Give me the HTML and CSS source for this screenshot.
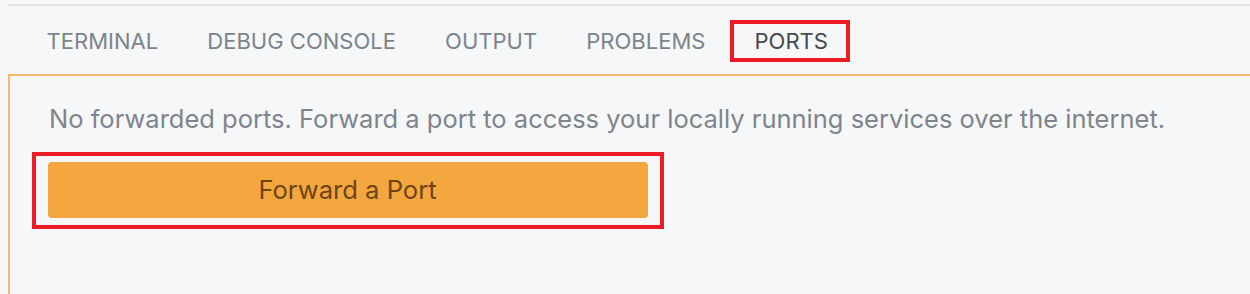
FILE: index.html
```html
<!DOCTYPE html>
<html>
<head>
<meta charset="utf-8">
<link rel="stylesheet" href="styles.css">
</head>
<body>
<div class="frame">
  <div class="tabs">
    <div class="tab">TERMINAL</div>
    <div class="tab">DEBUG CONSOLE</div>
    <div class="tab">OUTPUT</div>
    <div class="tab">PROBLEMS</div>
    <div class="tab tab-active">PORTS</div>
  </div>
  <div class="panel">
    <p class="message">No forwarded ports. Forward a port to access your locally running services over the internet.</p>
    <div class="highlight">
      <button class="forward-btn">Forward a Port</button>
    </div>
  </div>
</div>
</body>
</html>
```

FILE: styles.css
```css
* { box-sizing: border-box; }
html, body {
  margin: 0;
  padding: 0;
  background: #f6f7f9;
  height: 100%;
  overflow: hidden;
}
body {
  font-family: Inter, "Noto Sans", sans-serif;
  padding-top: 4px;
}
.frame {
  margin-left: 8px;
  border-top: 2px solid #e3e5e9;
  height: 290px;
  display: flex;
  flex-direction: column;
}
.tabs {
  display: flex;
  padding: 14px 0 12px 14px;
}
.tab {
  height: 42px;
  padding: 0 24.6px;
  display: flex;
  align-items: center;
  font-size: 22px;
  color: #7d838b;
  white-space: nowrap;
}
.tab-active {
  padding-right: 22px;
  color: #45484d;
  outline: 4px solid #ee1c25;
  outline-offset: -4px;
}
.panel {
  flex: 1;
  border-top: 2px solid #f5b86c;
  border-left: 2px solid #f5b86c;
  padding: 28px 0 0 39px;
}
.message {
  margin: 0;
  font-size: 25.5px;
  line-height: 30px;
  color: #7f848c;
  white-space: nowrap;
}
.highlight {
  margin: 18px 0 0 -17px;
  width: 632px;
  height: 77px;
  border: 4.5px solid #ee1c25;
  padding: 5.5px 11.5px;
}
.forward-btn {
  display: block;
  width: 600px;
  height: 56px;
  border: none;
  border-radius: 4px;
  background: #f5a73f;
  color: #6c4513;
  font-family: Inter, "Noto Sans", sans-serif;
  font-size: 25.6px;
  padding: 0;
}
```
